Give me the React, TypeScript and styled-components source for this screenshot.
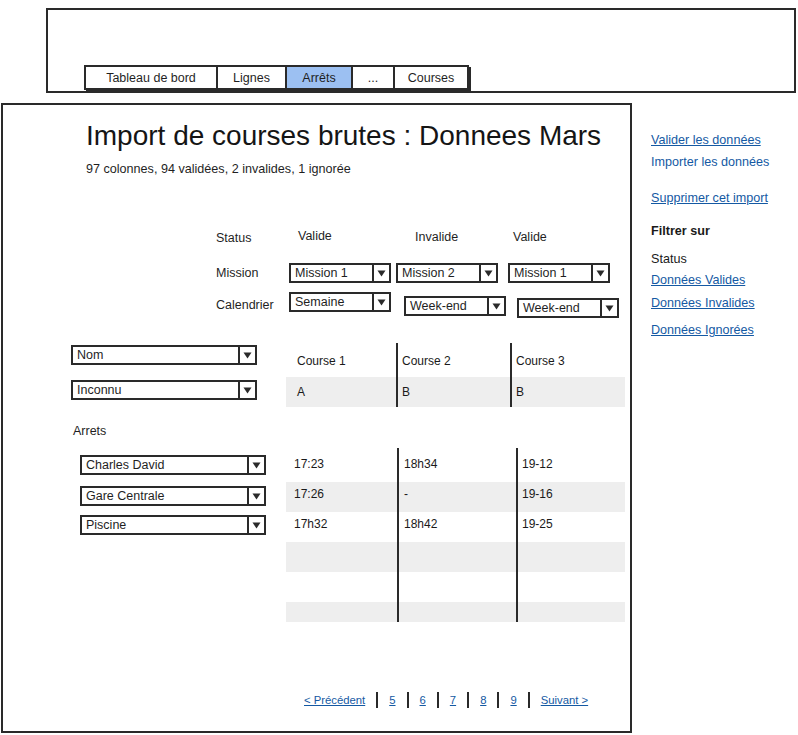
import styled, { createGlobalStyle } from "styled-components"

const GlobalStyle = createGlobalStyle`
  html, body {
    margin: 0;
    padding: 0;
    background: #ffffff;
  }
  body {
    font-family: "Liberation Sans", Arial, sans-serif;
    color: #1f1f1f;
  }
`

const ink = "#2a2a2a"
const linkBlue = "#1459a3"

const Page = styled.div`
  width: 798px;
  height: 735px;
  overflow: hidden;
`

const HeaderBox = styled.header`
  margin: 8px 0 0 46px;
  width: 750px;
  height: 85px;
  box-sizing: border-box;
  border: 2px solid ${ink};
  display: flex;
  align-items: flex-end;
  padding: 0 0 1px 36px;
`

const TabBar = styled.nav`
  display: flex;
  height: 25px;
  box-sizing: border-box;
  border: 2px solid ${ink};
  box-shadow: 2px 2px 0 ${ink};
  background: #fff;
`

const Tab = styled.div<{ $w: number; $active?: boolean }>`
  width: ${({ $w }) => $w}px;
  box-sizing: border-box;
  display: flex;
  align-items: center;
  justify-content: center;
  font-size: 12.5px;
  background: ${({ $active }) => ($active ? "#9cc0f2" : "#fff")};
  & + & {
    border-left: 2px solid ${ink};
  }
`

const Body = styled.div`
  display: flex;
  margin-top: 10px;
`

const MainPanel = styled.main`
  margin-left: 1px;
  width: 631px;
  height: 630px;
  box-sizing: border-box;
  border: 2px solid ${ink};
  display: flex;
  flex-direction: column;
`

const Title = styled.h1`
  margin: 15px 0 0 83px;
  font-size: 28px;
  line-height: 32px;
  font-weight: 400;
  color: #151515;
`

const Subtitle = styled.p`
  margin: 9px 0 0 83px;
  font-size: 12.6px;
  line-height: 16px;
`

const MapRow = styled.div<{ $mt: number; $h: number }>`
  display: grid;
  grid-template-columns: 73px 107px 112px 1fr;
  margin: ${({ $mt }) => $mt}px 0 0 213px;
  height: ${({ $h }) => $h}px;
  align-items: start;
`

const MapLabel = styled.div<{ $top?: number }>`
  font-size: 12.5px;
  line-height: 16px;
  margin-top: ${({ $top }) => $top ?? 0}px;
`

const MapValue = styled.div<{ $indent: number; $top?: number }>`
  font-size: 12.5px;
  line-height: 16px;
  padding-left: ${({ $indent }) => $indent}px;
  margin-top: ${({ $top }) => $top ?? 0}px;
`

const SelectCell = styled.div<{ $dx?: number; $dy?: number }>`
  margin-left: ${({ $dx }) => $dx ?? 0}px;
  margin-top: ${({ $dy }) => $dy ?? 0}px;
`

const SelectBox = styled.div<{ $w: number }>`
  width: ${({ $w }) => $w}px;
  height: 20px;
  box-sizing: border-box;
  border: 2px solid ${ink};
  background: #fff;
  display: flex;
  align-items: stretch;
  font-size: 12.5px;
`

const SelectText = styled.span`
  flex: 1;
  padding-left: 4px;
  display: flex;
  align-items: center;
  white-space: nowrap;
`

const SelectArrow = styled.span`
  width: 15px;
  border-left: 2px solid ${ink};
  display: flex;
  align-items: center;
  justify-content: center;
`

const Block = styled.div<{ $mt: number; $ml: number; $leftW: number }>`
  display: grid;
  grid-template-columns: ${({ $leftW }) => $leftW}px 339px;
  margin: ${({ $mt }) => $mt}px 0 0 ${({ $ml }) => $ml}px;
`

const SelectStack = styled.div`
  display: flex;
  flex-direction: column;
`

const Table = styled.div<{ $cols: string }>`
  display: grid;
  grid-template-columns: ${({ $cols }) => $cols};
`

const Column = styled.div<{ $pt: number }>`
  display: flex;
  flex-direction: column;
  padding-top: ${({ $pt }) => $pt}px;
  & + & {
    border-left: 2px solid ${ink};
  }
`

const Cell = styled.div<{ $h: number; $gray?: boolean; $pl: number; $pb?: number }>`
  height: ${({ $h }) => $h}px;
  box-sizing: border-box;
  background: ${({ $gray }) => ($gray ? "#eeeeee" : "transparent")};
  padding-left: ${({ $pl }) => $pl}px;
  padding-bottom: ${({ $pb }) => $pb ?? 0}px;
  display: flex;
  align-items: center;
  font-size: 12px;
  color: #1a1a1a;
`

const SectionLabel = styled.div`
  margin: 16px 0 0 70px;
  font-size: 12.5px;
  line-height: 16px;
`

const Pager = styled.div`
  margin: auto 0 23px 301px;
  display: flex;
  align-items: center;
  gap: 11px;
  height: 16px;
`

const PagerLink = styled.a`
  font-size: 11.3px;
  color: ${linkBlue};
  text-decoration: underline;
`

const PagerBar = styled.span`
  width: 2px;
  height: 16px;
  background: ${ink};
`

const Sidebar = styled.aside`
  padding-left: 19px;
  display: flex;
  flex-direction: column;
  align-items: flex-start;
`

const SideItem = styled.a<{ $mt: number; $plain?: boolean }>`
  margin-top: ${({ $mt }) => $mt}px;
  font-size: 12.6px;
  line-height: 16px;
  color: ${linkBlue};
  text-decoration: ${({ $plain }) => ($plain ? "none" : "underline")};
`

const SideText = styled.div<{ $mt: number; $bold?: boolean }>`
  margin-top: ${({ $mt }) => $mt}px;
  font-size: 12.6px;
  line-height: 16px;
  font-weight: ${({ $bold }) => ($bold ? 700 : 400)};
  color: #1a1a1a;
`

const Select = ({ label, width }: { label: string; width: number }) => (
  <SelectBox $w={width}>
    <SelectText>{label}</SelectText>
    <SelectArrow>
      <svg width="9" height="7" viewBox="0 0 9 7">
        <path d="M0.5 0.5 L8.5 0.5 L4.5 6.5 Z" fill={ink} />
      </svg>
    </SelectArrow>
  </SelectBox>
)

const tabs = [
  { name: "Tableau de bord", w: 130 },
  { name: "Lignes", w: 69 },
  { name: "Arrêts", w: 66, active: true },
  { name: "...", w: 42 },
  { name: "Courses", w: 74 },
]

const courses = [
  { head: "Course 1", value: "A", pl: 11 },
  { head: "Course 2", value: "B", pl: 4 },
  { head: "Course 3", value: "B", pl: 4 },
]

const stopTimes = [
  { pl: 8, times: ["17:23", "17:26", "17h32", "", "", ""] },
  { pl: 5, times: ["18h34", "-", "18h42", "", "", ""] },
  { pl: 4, times: ["19-12", "19-16", "19-25", "", "", ""] },
]

const stops = [
  { name: "Charles David", mt: 7 },
  { name: "Gare Centrale", mt: 11 },
  { name: "Piscine", mt: 9 },
]

export default function App() {
  return (
    <Page>
      <GlobalStyle />
      <HeaderBox>
        <TabBar>
          {tabs.map(t => (
            <Tab key={t.name} $w={t.w} $active={t.active}>
              {t.name}
            </Tab>
          ))}
        </TabBar>
      </HeaderBox>

      <Body>
        <MainPanel>
          <Title>Import de courses brutes : Donnees Mars</Title>
          <Subtitle>97 colonnes, 94 validées, 2 invalides, 1 ignorée</Subtitle>

          <MapRow $mt={48} $h={24}>
            <MapLabel $top={5}>Status</MapLabel>
            <MapValue $indent={9} $top={3}>Valide</MapValue>
            <MapValue $indent={19} $top={4}>Invalide</MapValue>
            <MapValue $indent={5} $top={4}>Valide</MapValue>
          </MapRow>
          <MapRow $mt={14} $h={20}>
            <MapLabel $top={2}>Mission</MapLabel>
            <SelectCell><Select label="Mission 1" width={102} /></SelectCell>
            <SelectCell><Select label="Mission 2" width={102} /></SelectCell>
            <SelectCell><Select label="Mission 1" width={102} /></SelectCell>
          </MapRow>
          <MapRow $mt={9} $h={26}>
            <MapLabel $top={5}>Calendrier</MapLabel>
            <SelectCell><Select label="Semaine" width={102} /></SelectCell>
            <SelectCell $dx={8} $dy={4}><Select label="Week-end" width={102} /></SelectCell>
            <SelectCell $dx={9} $dy={6}><Select label="Week-end" width={102} /></SelectCell>
          </MapRow>

          <Block $mt={25} $ml={68} $leftW={215}>
            <SelectStack>
              <SelectCell $dy={2}><Select label="Nom" width={186} /></SelectCell>
              <SelectCell $dy={15}><Select label="Inconnu" width={186} /></SelectCell>
            </SelectStack>
            <Table $cols="110px 114px 115px">
              {courses.map(c => (
                <Column key={c.head} $pt={2}>
                  <Cell $h={32} $pl={c.pl}>{c.head}</Cell>
                  <Cell $h={30} $pl={c.pl} $gray>{c.value}</Cell>
                </Column>
              ))}
            </Table>
          </Block>

          <SectionLabel>Arrets</SectionLabel>

          <Block $mt={9} $ml={77} $leftW={206}>
            <SelectStack>
              {stops.map(s => (
                <SelectCell key={s.name} $dy={s.mt}>
                  <Select label={s.name} width={186} />
                </SelectCell>
              ))}
            </SelectStack>
            <Table $cols="111px 119px 109px">
              {stopTimes.map((col, ci) => (
                <Column key={ci} $pt={4}>
                  {col.times.map((t, ri) => (
                    <Cell
                      key={ri}
                      $h={ri === 5 ? 20 : 30}
                      $pl={col.pl}
                      $pb={ri === 5 ? 0 : 6}
                      $gray={ri % 2 === 1}
                    >
                      {t}
                    </Cell>
                  ))}
                </Column>
              ))}
            </Table>
          </Block>

          <Pager>
            <PagerLink>&lt; Précédent</PagerLink>
            <PagerBar />
            <PagerLink>5</PagerLink>
            <PagerBar />
            <PagerLink>6</PagerLink>
            <PagerBar />
            <PagerLink>7</PagerLink>
            <PagerBar />
            <PagerLink>8</PagerLink>
            <PagerBar />
            <PagerLink>9</PagerLink>
            <PagerBar />
            <PagerLink>Suivant &gt;</PagerLink>
          </Pager>
        </MainPanel>

        <Sidebar>
          <SideItem $mt={29}>Valider les données</SideItem>
          <SideItem $mt={6} $plain>Importer les données</SideItem>
          <SideItem $mt={20}>Supprimer cet import</SideItem>
          <SideText $mt={17} $bold>Filtrer sur</SideText>
          <SideText $mt={12}>Status</SideText>
          <SideItem $mt={5}>Données Valides</SideItem>
          <SideItem $mt={7}>Données Invalides</SideItem>
          <SideItem $mt={11}>Données Ignorées</SideItem>
        </Sidebar>
      </Body>
    </Page>
  )
}
